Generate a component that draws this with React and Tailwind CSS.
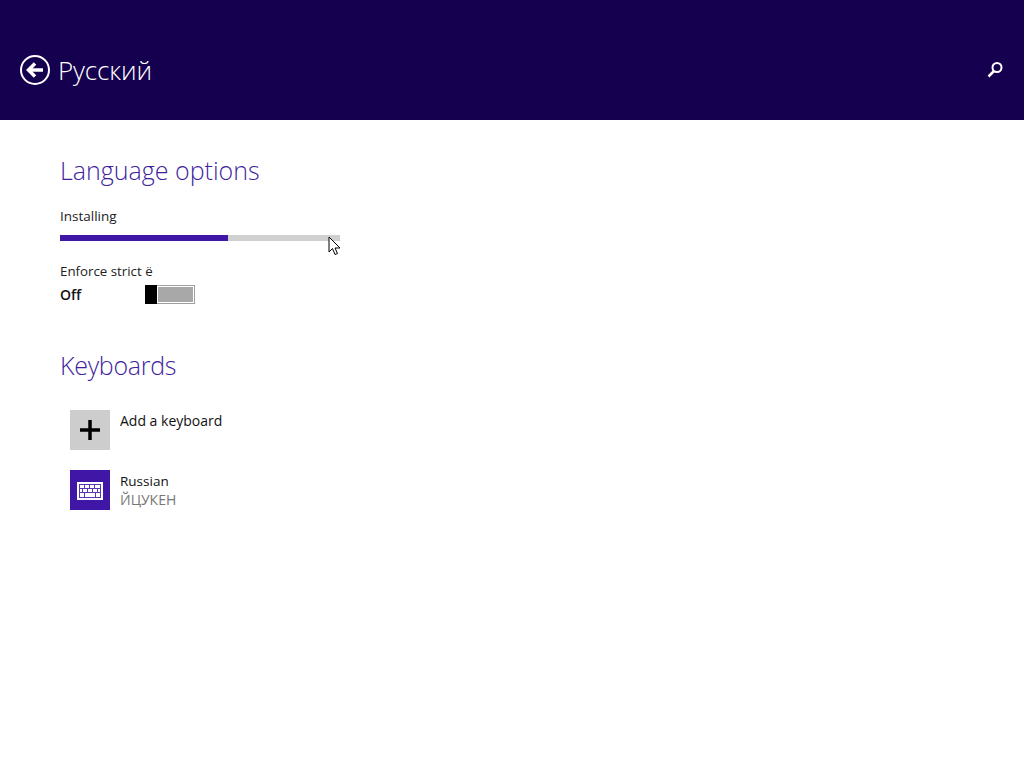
const font = { fontFamily: '"Open Sans", "Noto Sans", sans-serif' };

const BackIcon = () => (
  <svg width="32" height="32" viewBox="0 0 32 32" fill="none" stroke="#fff">
    <circle cx="16" cy="16" r="14" strokeWidth="2" />
    <path d="M24 16H10" strokeWidth="3.500" />
    <path d="M16 9.500L9.500 16l6.500 6.500" strokeWidth="3.500" />
  </svg>
);

const SearchIcon = () => (
  <svg width="16" height="16" viewBox="0 0 16 16" fill="none" stroke="#fff">
    <circle cx="10" cy="5.500" r="4.500" strokeWidth="2" />
    <path d="M7 9l-5.500 5.500" strokeWidth="2.500" />
  </svg>
);

const KeyboardIcon = () => (
  <svg width="26" height="18" viewBox="0 0 26 18" className="mt-[2px]">
    <rect x="0" y="0" width="26" height="18" fill="#fff" />
    <g fill="none" stroke="#5a35b5" strokeWidth="1">
      <rect x="2.500" y="2.500" width="21" height="13" />
      <path d="M2.500 6.500h21M2.500 10.500h21M7.500 2.500v4M12.500 2.500v4M17.500 2.500v4M5.500 6.500v4M10.500 6.500v4M15.500 6.500v4M20.500 6.500v4M7.500 10.500v5M18.500 10.500v5" />
    </g>
  </svg>
);

const Cursor = () => (
  <svg width="14" height="20" viewBox="0 0 14 20" className="absolute left-[268px] top-[1px]">
    <path d="M1 1v15l3.500-3.500 2.500 6 2.500-1-2.500-5.500H12z" fill="#fff" stroke="#000" strokeWidth="1" />
  </svg>
);

export default function App() {
  return (
    <div className="w-[1024px] h-[768px] bg-white overflow-hidden" style={font}>
      <header className="h-[120px] bg-[#15004f] flex items-center justify-between pt-5 pl-[19px] pr-[21px]">
        <div className="flex items-center gap-[7px]">
          <BackIcon />
          <h1 className="text-[26px] leading-8 text-white font-light tracking-[-0.15px]">Русский</h1>
        </div>
        <SearchIcon />
      </header>

      <main className="pl-[60px] pt-[33px]">
        <h2 className="text-[25px] leading-9 font-light text-[#3f1fa0] -mt-px">Language options</h2>

        <div className="mt-[18px] text-[13.500px] leading-5 text-[#222]">Installing</div>
        <div className="relative mt-[9px] w-[280px] h-[6px] bg-[#d0d0d0]">
          <div className="w-[168px] h-full bg-[#3f16a6]" />
          <Cursor />
        </div>

        <div className="mt-[20px] text-[13.300px] leading-5 text-[#222]">Enforce strict ё</div>
        <div className="mt-[4px] flex items-center">
          <span className="w-[85px] text-[14px] leading-5 font-semibold text-[#111]">Off</span>
          <div className="flex w-[50px] h-[19px] border border-[#a0a0a0] bg-white -mt-px">
            <div className="w-[12px] bg-black -my-px -ml-px" />
            <div className="flex-1 m-px bg-[#a8a8a8]" />
          </div>
        </div>

        <h2 className="mt-[42px] text-[25px] leading-9 font-light text-[#3f1fa0] tracking-[-0.3px]">Keyboards</h2>

        <div className="mt-[27px] ml-[10px] flex flex-col gap-[20px]">
          <div className="flex gap-[10px]">
            <div className="w-10 h-10 bg-[#cdcdcd] flex items-center justify-center">
              <svg width="20" height="20" viewBox="0 0 20 20" fill="none" stroke="#000" strokeWidth="3.500">
                <path d="M10 0v20M0 10h20" />
              </svg>
            </div>
            <div className="text-[14px] leading-5 text-[#111] mt-px">Add a keyboard</div>
          </div>
          <div className="flex gap-[10px]">
            <div className="w-10 h-10 bg-[#3f16a6] flex items-center justify-center">
              <KeyboardIcon />
            </div>
            <div className="mt-px">
              <div className="text-[13.500px] leading-5 text-[#111]">Russian</div>
              <div className="text-[14px] leading-5 text-[#777] -mt-px">ЙЦУКЕН</div>
            </div>
          </div>
        </div>
      </main>
    </div>
  );
}
